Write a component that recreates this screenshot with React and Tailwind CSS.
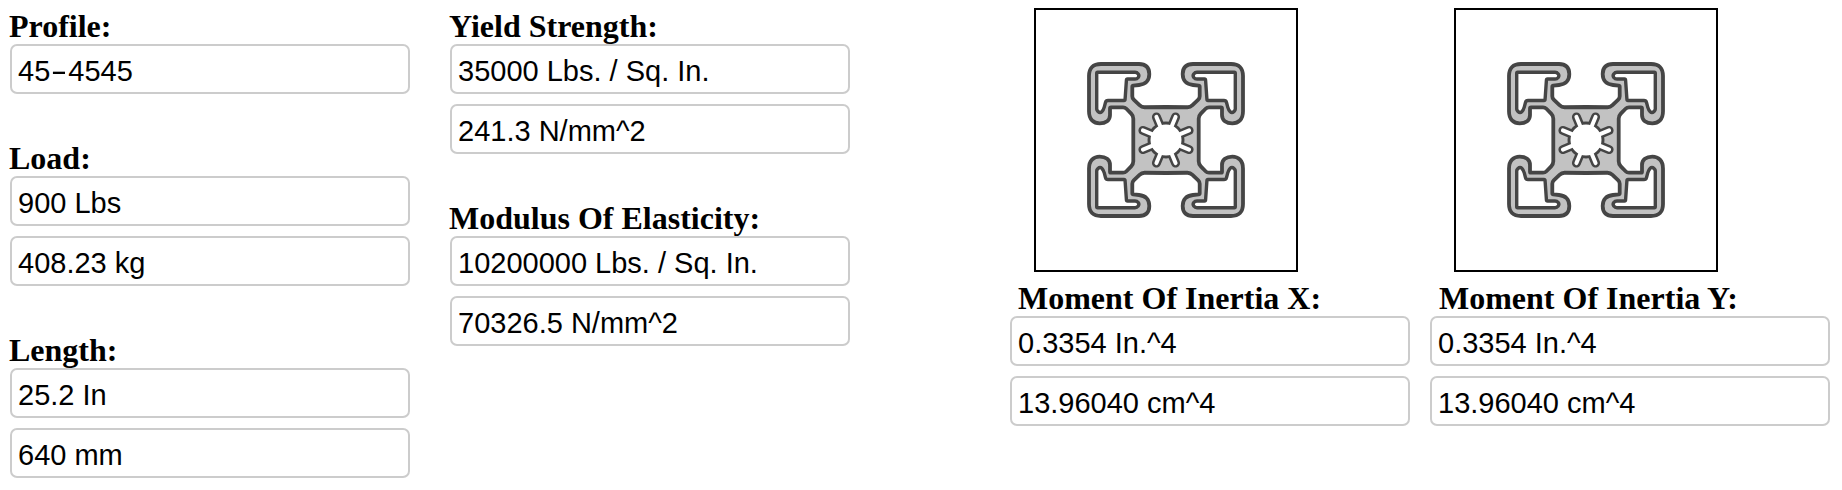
const outerQ = [[0,-33],[-24.3,-32.7],[-33.7,-41.7],[-33.7,-54.3],[-22,-55.5],[-16.7,-61],[-16.7,-71],[-22,-76],[-71,-76],[-77,-70],[-77,-22.7],[-71,-16.7],[-61.7,-16.7],[-56,-21],[-56,-32.7],[-41,-32.7],[-32.7,-24.3],[-32.7,0]];
const outerR = [0,3,2,1,5,5,5,5,6,6,6,6,5,4,1,2,3,0];
const cavity = [[-69.3,-67.7],[-29,-67.7],[-26.5,-64.3],[-29,-61],[-39.5,-61],[-41,-39.5],[-60,-39.5],[-62.5,-30],[-66,-26.5],[-69.3,-30]];
const cavityR = [1,2,3,2,1,1,2,3,3,1];

function rounded(pts, radii) {
  const n = pts.length;
  let d = "";
  pts.forEach((p, i) => {
    const a = pts[(i - 1 + n) % n];
    const b = pts[(i + 1) % n];
    const r = radii[i];
    const la = Math.hypot(a[0] - p[0], a[1] - p[1]) || 1;
    const lb = Math.hypot(b[0] - p[0], b[1] - p[1]) || 1;
    const s = [p[0] + ((a[0] - p[0]) * Math.min(r, la / 2)) / la, p[1] + ((a[1] - p[1]) * Math.min(r, la / 2)) / la];
    const e = [p[0] + ((b[0] - p[0]) * Math.min(r, lb / 2)) / lb, p[1] + ((b[1] - p[1]) * Math.min(r, lb / 2)) / lb];
    d += `${i === 0 ? "M" : "L"}${s[0].toFixed(2)} ${s[1].toFixed(2)}Q${p[0]} ${p[1]} ${e[0].toFixed(2)} ${e[1].toFixed(2)}`;
  });
  return d + "Z";
}

function fullOutline() {
  const pts = [];
  const rs = [];
  const add = (fx, fy, rev) => {
    const idx = outerQ.map((_, i) => i);
    if (rev) idx.reverse();
    idx.slice(0, -1).forEach((i) => {
      pts.push([outerQ[i][0] * fx, outerQ[i][1] * fy]);
      rs.push(outerR[i]);
    });
  };
  add(1, 1, false);
  add(1, -1, true);
  add(-1, -1, false);
  add(-1, 1, true);
  return rounded(pts, rs);
}

const OUTLINE = fullOutline();
const CAVITY = rounded(cavity, cavityR);
const ANGLES = [22.5, 67.5, 112.5, 157.5, 202.5, 247.5, 292.5, 337.5];

function Profile() {
  const dark = "#454545";
  return (
    <svg viewBox="-130 -130 260 260" width="260" height="260" className="block">
      <defs>
        <filter id="soft" x="-10%" y="-10%" width="120%" height="120%">
          <feGaussianBlur stdDeviation="0.55" />
        </filter>
      </defs>
      <g filter="url(#soft)">
        <path d={OUTLINE} fill="#c2c2c2" stroke={dark} strokeWidth="3.8" strokeLinejoin="round" />
        {[[1, 1], [-1, 1], [1, -1], [-1, -1]].map(([x, y]) => (
          <g key={`${x}${y}`} transform={`scale(${x} ${y})`}>
            <path d={CAVITY} fill="#fff" stroke={dark} strokeWidth="3.4" strokeLinejoin="round" />
          </g>
        ))}
        {ANGLES.map((a) => (
          <line key={a} x1="0" y1="0" x2="0" y2="-25" transform={`rotate(${a})`} stroke={dark} strokeWidth="9" strokeLinecap="round" />
        ))}
        <circle r="18.5" fill={dark} />
        <circle r="15.5" fill="#fff" />
        {ANGLES.map((a) => (
          <line key={a} x1="0" y1="-10" x2="0" y2="-25" transform={`rotate(${a})`} stroke="#fff" strokeWidth="4" strokeLinecap="round" />
        ))}
      </g>
    </svg>
  );
}

function Label({ children, className = "" }) {
  return (
    <div className={`h-[32px] font-['Liberation_Serif',serif] text-[32px] leading-[29px] font-bold whitespace-nowrap text-black ${className}`}>
      {children}
    </div>
  );
}

function Box({ children }) {
  return (
    <div className="box-border h-[50px] w-[400px] rounded-[7px] border-2 border-[#cccccc] pl-[6px] font-['Liberation_Sans',sans-serif] text-[29px] leading-[50px] text-black">
      {children}
    </div>
  );
}

function Group({ label, values, labelClass }) {
  return (
    <div>
      <Label className={labelClass}>{label}</Label>
      <div className="flex flex-col gap-[10px]">
        {values.map((v, i) => (
          <Box key={i}>{v}</Box>
        ))}
      </div>
    </div>
  );
}

function Inertia({ axis, labelClass }) {
  return (
    <div className="w-[400px]">
      <div className="ml-[24px] box-border h-[264px] w-[264px] border-2 border-black bg-white">
        <Profile />
      </div>
      <div className="mt-[12px]">
        <Group label={`Moment Of Inertia ${axis}:`} values={["0.3354 In.^4", "13.96040 cm^4"]} labelClass={labelClass} />
      </div>
    </div>
  );
}

const profileValue = (
  <>
    45<span className="inline-block w-[18px] scale-x-[1.7] text-center">-</span>4545
  </>
);

export default function App() {
  return (
    <div className="flex h-[490px] w-[1842px] items-start bg-white">
      <div className="ml-[10px] flex flex-col gap-[50px] pt-[12px]">
        <Group label="Profile:" values={[profileValue]} labelClass="-ml-[1px]" />
        <Group label="Load:" values={["900 Lbs", "408.23 kg"]} labelClass="-ml-[1px]" />
        <Group label="Length:" values={["25.2 In", "640 mm"]} labelClass="-ml-[1px]" />
      </div>
      <div className="ml-[40px] flex flex-col gap-[50px] pt-[12px]">
        <Group label="Yield Strength:" values={["35000 Lbs. / Sq. In.", "241.3 N/mm^2"]} labelClass="-ml-[1px]" />
        <Group label="Modulus Of Elasticity:" values={["10200000 Lbs. / Sq. In.", "70326.5 N/mm^2"]} labelClass="-ml-[1px]" />
      </div>
      <div className="ml-[160px] flex gap-[20px] pt-[8px]">
        <Inertia axis="X" labelClass="ml-[8px]" />
        <Inertia axis="Y" labelClass="ml-[9px]" />
      </div>
    </div>
  );
}
